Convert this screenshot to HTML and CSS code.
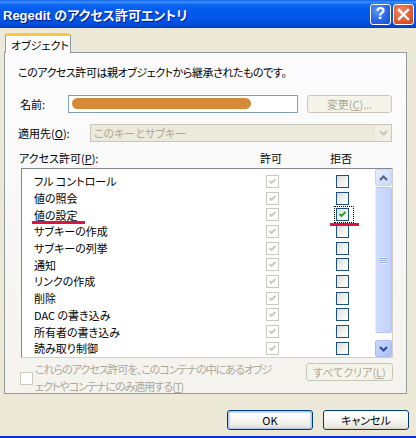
FILE: index.html
```html
<!DOCTYPE html>
<html lang="ja">
<head>
    <meta charset="UTF-8">
    <title>Regedit のアクセス許可エントリ</title>
    <link rel="stylesheet" href="styles.css">
</head>
<body>

<div class="window">
    <div class="titlebar">
        <span class="title">Regedit のアクセス許可エントリ</span>
        <div class="caption">
            <span class="cap-btn help">?</span>
            <span class="cap-btn close">
                <svg width="13" height="13" viewBox="0 0 13 13"><path d="M2 2 L11 11 M11 2 L2 11" stroke="#fff" stroke-width="2.4" stroke-linecap="square"/></svg>
            </span>
        </div>
    </div>

    <div class="client">
        <div class="tabs">
            <div class="tab">オブジェクト</div>
        </div>

        <div class="panel">
            <p class="note">このアクセス許可は親オブジェクトから継承されたものです。</p>

            <div class="field-row">
                <span class="label name-label">名前:</span>
                <div class="textbox"><span class="redact"></span></div>
                <button class="btn disabled change-btn">変更(<u>C</u>)...</button>
            </div>

            <div class="field-row">
                <span class="label apply-label">適用先(<u>O</u>):</span>
                <div class="combo">
                    <span class="combo-text">このキーとサブキー</span>
                    <span class="combo-arrow">
                        <svg width="9" height="6" viewBox="0 0 9 6"><path d="M1 1 L4.5 4.5 L8 1" fill="none" stroke="#c9c7ba" stroke-width="2"/></svg>
                    </span>
                </div>
            </div>

            <div class="perm-head">
                <span class="perm-label">アクセス許可(<u>P</u>):</span>
                <span class="col-head">許可</span>
                <span class="col-head deny-head">拒否</span>
            </div>

            <div class="list">
                <div class="items" id="items"></div>
                <div class="scrollbar">
                    <div class="sb-btn up">
                        <svg width="9" height="6" viewBox="0 0 9 6"><path d="M1 5 L4.5 1.5 L8 5" fill="none" stroke="#4d6185" stroke-width="2"/></svg>
                    </div>
                    <div class="sb-track">
                        <div class="thumb"><span class="grip"></span></div>
                    </div>
                    <div class="sb-btn down">
                        <svg width="9" height="6" viewBox="0 0 9 6"><path d="M1 1 L4.5 4.5 L8 1" fill="none" stroke="#2e4a8e" stroke-width="2"/></svg>
                    </div>
                </div>
                <span class="mark mark-name"></span>
                <span class="mark mark-deny"></span>
            </div>

            <div class="apply-row">
                <span class="cb dis"></span>
                <span class="apply-text">これらのアクセス許可を、このコンテナの中にあるオブジ<br>ェクトやコンテナにのみ適用する(<u>T</u>)</span>
                <button class="btn disabled clear-btn">すべてクリア(<u>L</u>)</button>
            </div>
        </div>

        <div class="footer">
            <button class="btn default">OK</button>
            <button class="btn">キャンセル</button>
        </div>
    </div>
</div>

<script>
    // permission rows: [name, allowed (inherited), denied]
    const perms = [
        ['フル コントロール', true, false],
        ['値の照会', true, false],
        ['値の設定', true, true],
        ['サブキーの作成', true, false],
        ['サブキーの列挙', true, false],
        ['通知', true, false],
        ['リンクの作成', true, false],
        ['削除', true, false],
        ['DAC の書き込み', true, false],
        ['所有者の書き込み', true, false],
        ['読み取り制御', true, false]
    ];

    const check = color =>
        `<svg width="11" height="11" viewBox="0 0 11 11"><path d="M2.5 5 L4.5 7 L8.5 3" fill="none" stroke="${color}" stroke-width="1.8"/></svg>`;

    const items = document.getElementById('items');
    perms.forEach(([name, allow, deny]) => {
        items.innerHTML += `
            <div class="item">
                <span class="item-name">${name}</span>
                <span class="cb dis">${allow ? check('#cac8bb') : ''}</span>
                <span></span>
                <span class="cb${deny ? ' focus' : ''}">${deny ? check('#21a121') : ''}</span>
            </div>`;
    });
</script>

</body>
</html>
```

FILE: styles.css
```css
body {
    margin: 0;
    font-family: "Noto Sans CJK JP", sans-serif;
    font-size: 11px;
    font-feature-settings: "palt";
    color: #000;
    background: #ece9d8;
}
u {
    text-decoration-thickness: 1px;
    text-underline-offset: 1px;
}
.window {
    width: 416px;
    height: 438px;
    box-sizing: border-box;
    display: flex;
    flex-direction: column;
    background: #ece9d8;
    border-bottom: 2px solid #0831d9;
}

/* title bar */
.titlebar {
    height: 28px;
    flex: none;
    display: flex;
    align-items: center;
    padding: 0 2px 0 3px;
    background: linear-gradient(#0a5fe8 0%, #3d8ffb 7%, #0a63f0 18%, #0058ee 45%, #0054e3 75%, #0049d6 92%, #003bc4 100%);
}
.title {
    color: #fff;
    font-family: "Liberation Sans", "Noto Sans CJK JP", sans-serif;
    font-weight: bold;
    font-size: 13px;
    text-shadow: 1px 1px 0 #0a1883;
}
.caption {
    margin-left: auto;
    display: flex;
    gap: 2px;
}
.cap-btn {
    width: 21px;
    height: 21px;
    box-sizing: border-box;
    border: 1px solid #fff;
    border-radius: 3px;
    display: flex;
    align-items: center;
    justify-content: center;
    color: #fff;
}
.help {
    background: radial-gradient(circle at 35% 30%, #5f95f8, #2660e4 60%, #1a4fd0);
    font-family: "Liberation Sans", sans-serif;
    font-weight: bold;
    font-size: 16px;
}
.close {
    background: radial-gradient(circle at 35% 30%, #f08a64, #e2582e 60%, #c6400f);
}

/* client area */
.client {
    flex: 1;
    display: flex;
    flex-direction: column;
}
.tabs {
    display: flex;
    padding: 5px 0 0 5px;
    height: 19px;
}
.tab {
    width: 66px;
    height: 20px;
    box-sizing: border-box;
    padding: 2px 0 0 5px;
    background: #fcfcfe;
    border: 1px solid #919b9c;
    border-top: 3px solid #ffc83c;
    border-bottom: none;
    border-radius: 3px 3px 0 0;
    position: relative;
    z-index: 1;
    line-height: 14px;
    white-space: nowrap;
}
.panel {
    margin-left: 4px;
    width: 403px;
    height: 342px;
    box-sizing: border-box;
    border: 1px solid #919b9c;
    padding: 0 13px 0 13px;
    background: linear-gradient(#fcfcfe, #f4f3ee);
}
.note {
    margin: 11px 0 0 0;
    line-height: 16px;
    letter-spacing: -0.45px;
    white-space: nowrap;
}
.field-row {
    display: flex;
    align-items: center;
    height: 18px;
    margin-top: 15px;
}
.field-row + .field-row {
    margin-top: 11px;
}
.label {
    flex: none;
}
.name-label {
    width: 48px;
    padding-left: 2px;
}
.apply-label {
    width: 72px;
}
.textbox {
    width: 230px;
    height: 18px;
    box-sizing: border-box;
    border: 1px solid #7f9db9;
    background: #fff;
    padding: 2px 0 0 3px;
}
.redact {
    display: block;
    width: 179px;
    height: 11px;
    border-radius: 6px;
    background: #d68a36;
    filter: blur(0.7px);
}
.btn {
    font-family: inherit;
    font-size: 11px;
    font-feature-settings: "palt";
    height: 20px;
    width: 86px;
    padding: 0;
    border: 1px solid #003c74;
    border-radius: 3px;
    background: linear-gradient(#fff 0%, #f4f4f0 60%, #e6e5de 90%, #d6d0c5 100%);
    color: #000;
    line-height: 16px;
}
.btn.default {
    box-shadow: inset 0 0 0 1px #b0c8f0, inset 0 0 0 2px #cedcf6;
}
.btn.disabled {
    border-color: #c9c7ba;
    background: #f5f4ea;
    color: #aca899;
}
.change-btn {
    margin-left: 9px;
    height: 18px;
    width: 85px;
}
.combo {
    width: 302px;
    height: 18px;
    box-sizing: border-box;
    border: 1px solid #c9c7ba;
    background: #ebeadb;
    display: flex;
    align-items: center;
}
.combo-text {
    flex: 1;
    color: #aca899;
    padding-left: 3px;
    line-height: 16px;
}
.combo-arrow {
    width: 16px;
    height: 16px;
    display: flex;
    align-items: center;
    justify-content: center;
    background: #f1efe4;
    border-left: 1px solid #e6e4d8;
}

/* permission list */
.perm-head {
    display: grid;
    grid-template-columns: 241px 24px 46px 24px;
    margin-top: 8px;
    height: 16px;
    line-height: 16px;
}
.perm-label {
    padding-left: 1px;
}
.col-head {
    text-align: center;
}
.deny-head {
    grid-column: 4;
}
.list {
    position: relative;
    margin: 2px 0 0 3px;
    width: 372px;
    height: 190px;
    box-sizing: border-box;
    border: 1px solid;
    border-color: #828790 #d4d0c8 #d4d0c8 #828790;
    background: #fff;
    display: flex;
    overflow: hidden;
}
.items {
    flex: 1;
    padding-top: 4px;
}
.item {
    display: grid;
    grid-template-columns: 232px 13px 57px 13px;
    align-items: center;
    padding-left: 12px;
    height: 16.7px;
    line-height: 16px;
}
.item-name {
    white-space: nowrap;
}
.cb {
    width: 13px;
    height: 13px;
    box-sizing: border-box;
    border: 1px solid #1c5180;
    background: linear-gradient(135deg, #dcdcd7 0%, #f2f2ee 55%, #fff 100%);
    display: flex;
    align-items: center;
    justify-content: center;
    position: relative;
}
.cb.dis {
    border-color: #cac8bb;
    background: #fff;
}
.cb.focus::after {
    content: "";
    position: absolute;
    left: -3px;
    top: -3px;
    width: 20px;
    height: 17px;
    box-sizing: border-box;
    border: 1px dotted #000;
}

/* scrollbar */
.scrollbar {
    width: 17px;
    flex: none;
    display: flex;
    flex-direction: column;
    background: #fdfdfa;
}
.sb-btn {
    height: 17px;
    box-sizing: border-box;
    border: 1px solid #c3d3fd;
    border-radius: 2px;
    display: flex;
    align-items: center;
    justify-content: center;
    background: linear-gradient(135deg, #e6eefe, #c7d6fc);
}
.sb-btn.down {
    margin-top: 3px;
    border-color: #a7bdf3;
    background: linear-gradient(135deg, #c9d8fd, #a9c0f8);
}
.sb-track {
    flex: 1;
    padding-top: 1px;
}
.thumb {
    height: 146px;
    box-sizing: border-box;
    border: 1px solid #b1c5f4;
    border-left-color: #e8eefd;
    border-radius: 2px;
    background: linear-gradient(90deg, #cfdcfd, #c1d2fb);
    display: flex;
    align-items: center;
    justify-content: center;
}
.grip {
    width: 7px;
    height: 7px;
    background: repeating-linear-gradient(#eef3fe 0 1px, #8ca6e4 1px 2px);
}

/* red marks drawn over the list */
.mark {
    position: absolute;
    height: 3px;
    background: #dc1446;
}
.mark-name {
    left: 10px;
    top: 52px;
    width: 53px;
}
.mark-deny {
    left: 308px;
    top: 54px;
    width: 29px;
}

.apply-row {
    display: flex;
    align-items: flex-start;
    margin-top: 3px;
}
.apply-row > .cb {
    margin: 11px 0 0 2px;
}
.apply-text {
    color: #aca899;
    line-height: 17px;
    margin-left: 2px;
    letter-spacing: -1px;
    white-space: nowrap;
}
.clear-btn {
    margin: 2px 0 0 auto;
    height: 18px;
    width: 87px;
}

.footer {
    display: flex;
    justify-content: flex-end;
    gap: 10px;
    padding: 16px 7px 0 0;
}
```
